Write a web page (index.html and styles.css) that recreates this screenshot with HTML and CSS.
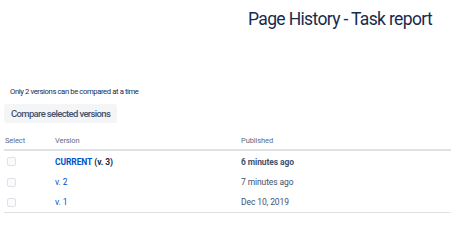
FILE: index.html
```html
<!DOCTYPE html>
<html>
<head>
<meta charset="utf-8">
<link rel="stylesheet" href="styles.css">
</head>
<body>
<div class="page">
  <header class="page-header">
    <h1 class="title">Page History - Task report</h1>
  </header>
  <p class="note">Only 2 versions can be compared at a time</p>
  <button class="btn">Compare selected versions</button>
  <table class="history">
    <thead>
      <tr>
        <th class="col-select">Select</th>
        <th class="col-version">Version</th>
        <th class="col-published">Published</th>
      </tr>
    </thead>
    <tbody>
      <tr>
        <td><span class="checkbox"></span></td>
        <td><a class="link strong" href="#">CURRENT</a> <span class="strong">(v. 3)</span></td>
        <td class="strong">6 minutes ago</td>
      </tr>
      <tr>
        <td><span class="checkbox"></span></td>
        <td><a class="link" href="#">v. 2</a></td>
        <td>7 minutes ago</td>
      </tr>
      <tr>
        <td><span class="checkbox"></span></td>
        <td><a class="link" href="#">v. 1</a></td>
        <td>Dec 10, 2019</td>
      </tr>
    </tbody>
  </table>
</div>
</body>
</html>
```
FILE: styles.css
```css
html, body {
  margin: 0;
  padding: 0;
  background: #ffffff;
}
body {
  font-family: Roboto, "Liberation Sans", sans-serif;
  color: #172b4d;
  overflow: hidden;
}
.page {
  padding: 0 0 0 4px;
}
.page-header {
  display: flex;
  padding: 5px 0 0 244px;
}
.title {
  margin: 0;
  font-size: 17.5px;
  font-weight: 400;
  letter-spacing: -0.65px;
  line-height: 28px;
  color: #172b4d;
  white-space: nowrap;
}
.note {
  margin: 53px 0 0 6px;
  font-size: 7.7px;
  letter-spacing: -0.4px;
  line-height: 12px;
  color: #172b4d;
}
.btn {
  margin: 6px 0 0 0;
  height: 19px;
  padding: 0 7px;
  border: none;
  border-radius: 3px;
  background: #f4f5f7;
  color: #42526e;
  font-family: inherit;
  font-size: 9.5px;
  font-weight: 500;
  letter-spacing: -0.65px;
  white-space: nowrap;
}
.history {
  margin-top: 12px;
  width: 460px;
  border-collapse: collapse;
}
.history th {
  text-align: left;
  font-weight: 400;
  font-size: 7.5px;
  letter-spacing: -0.1px;
  color: #5e6c84;
  padding: 0 0 2px 1px;
  line-height: 12px;
  border-bottom: 2px solid #dfe1e6;
}
.col-select { width: 49px; }
.col-version { width: 185px; }
.history td {
  height: 20px;
  padding: 0 0 0 1px;
  vertical-align: middle;
  line-height: 12px;
  color: #42526e;
  font-size: 8.5px;
  letter-spacing: -0.1px;
}
.history tbody tr:first-child td { height: 21px; }
.history tbody tr:last-child td {
  border-bottom: 1px solid #dfe1e6;
  height: 20px;
}
.checkbox {
  display: block;
  margin-left: 2px;
  width: 7px;
  height: 7px;
  border: 1px solid #dfe1e6;
  border-radius: 2px;
  background: #fafbfc;
}
.link {
  color: #0052cc;
  text-decoration: none;
}
.strong {
  font-weight: 700;
  color: #172b4d;
}
.link.strong { color: #0052cc; }
```
